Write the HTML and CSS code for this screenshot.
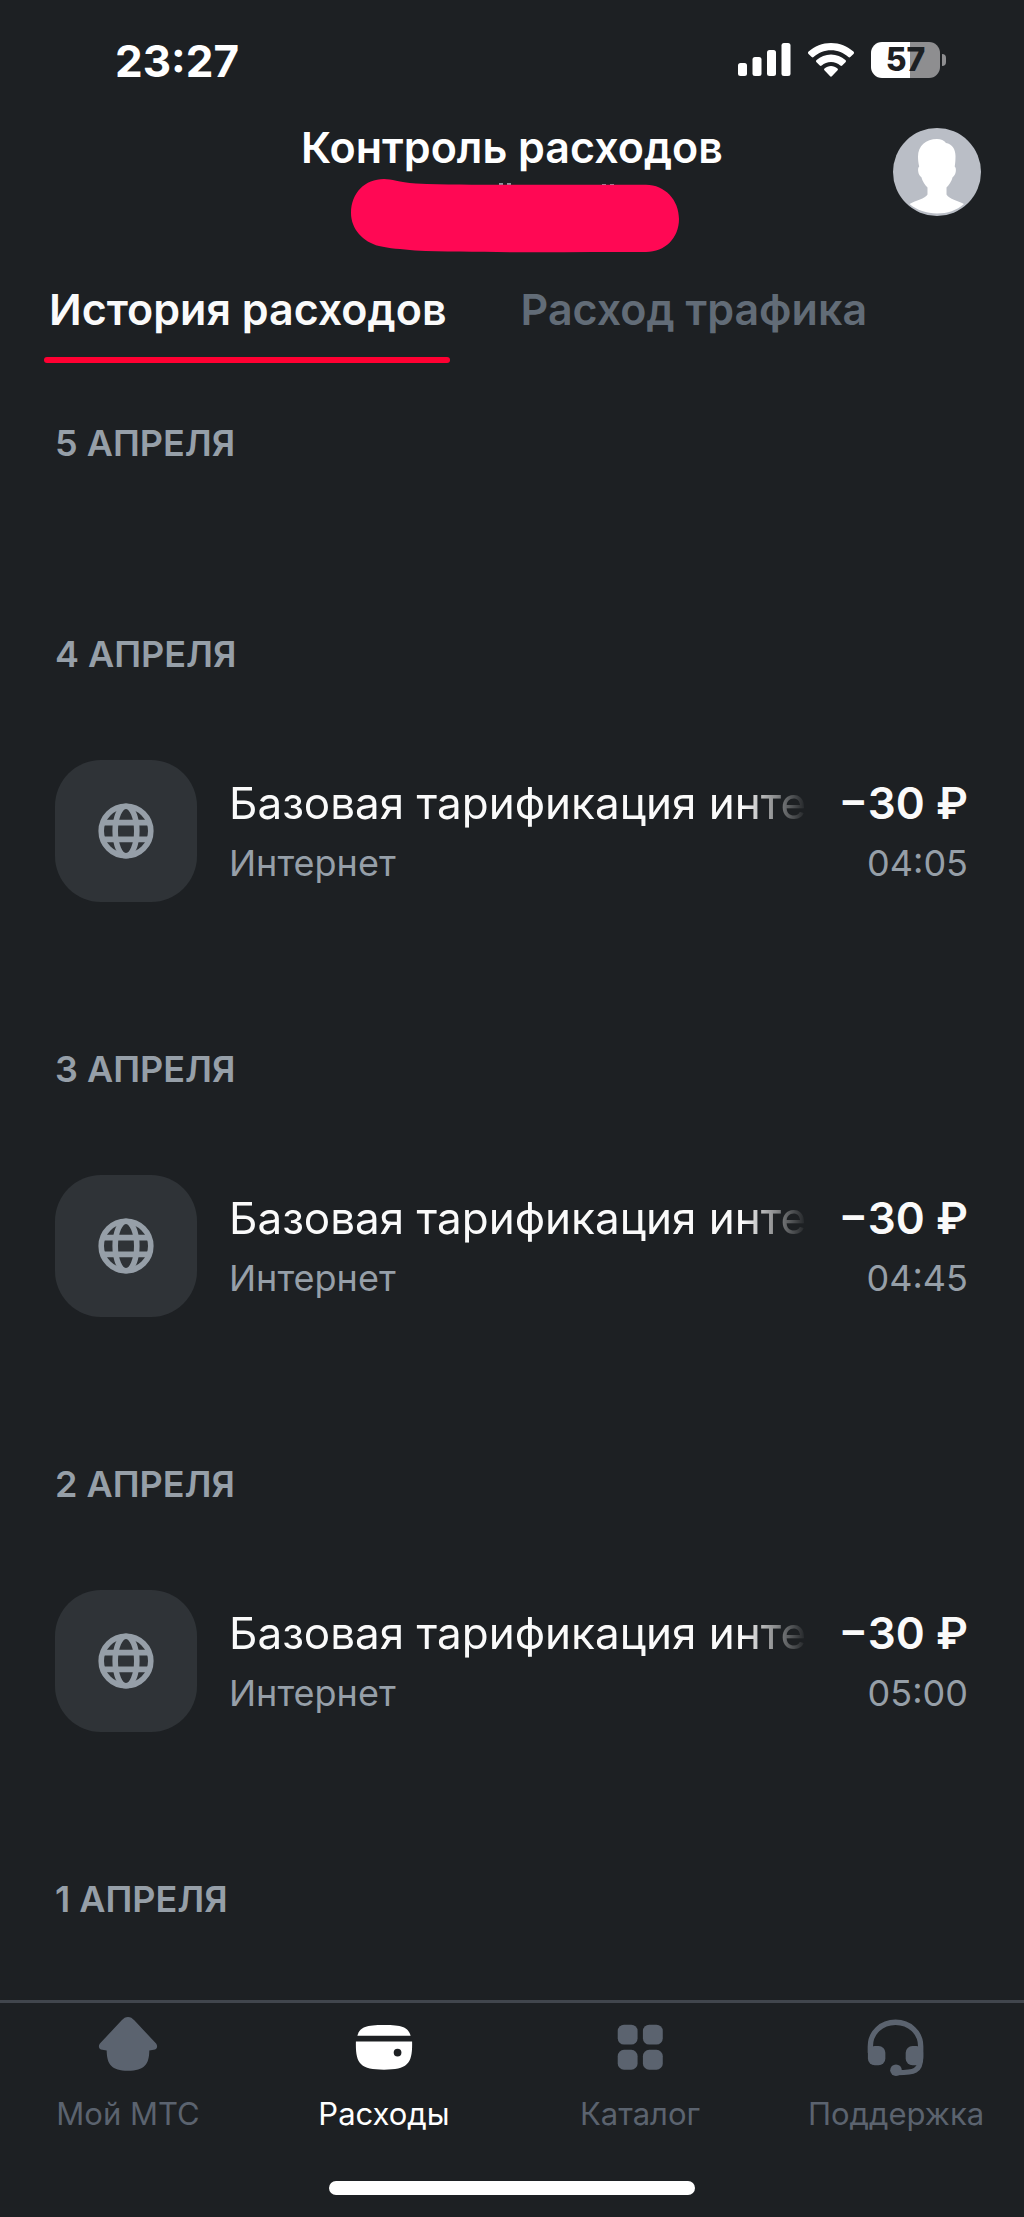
FILE: index.html
```html
<!DOCTYPE html>
<html lang="ru">
<head>
<meta charset="utf-8">
<meta name="viewport" content="width=device-width, initial-scale=1">
<title>Контроль расходов</title>
<link rel="stylesheet" href="styles.css">
</head>
<body>
<svg class="sprite" aria-hidden="true">
  <symbol id="globe" viewBox="0 0 56 56">
    <g fill="none" stroke="currentColor" stroke-width="5.600">
      <circle cx="28" cy="28" r="24.800"/>
      <ellipse cx="28" cy="28" rx="10.800" ry="24.800"/>
      <path d="M5 19.600h46M5 36.400h46"/>
    </g>
  </symbol>
</svg>

<div class="status">
  <time class="clock">23:27</time>
  <div class="indicators">
    <svg class="signal" viewBox="0 0 53 34" aria-hidden="true">
      <g fill="#fff">
        <rect x="0" y="20" width="9" height="13" rx="2.500"/>
        <rect x="14.500" y="14" width="9" height="19" rx="2.500"/>
        <rect x="29" y="7" width="9" height="26" rx="2.500"/>
        <rect x="43.500" y="0" width="9" height="33" rx="2.500"/>
      </g>
    </svg>
    <svg class="wifi" viewBox="0 0 46 34" aria-hidden="true">
      <g fill="#fff">
        <path d="M23 0C14.400 0 6.500 3.200.6 8.600c-.8.700-.8 1.600-.1 2.300l3.200 3.200c.6.600 1.300.6 1.900 0C10.300 9.800 16.300 7.300 23 7.300s12.700 2.500 17.400 6.800c.6.600 1.300.6 1.900 0l3.200-3.200c.7-.7.700-1.600-.1-2.300C39.500 3.200 31.600 0 23 0z"/>
        <path d="M23 11.500c-5.500 0-10.500 2.100-14.400 5.500-.7.600-.8 1.500-.1 2.200l3.300 3.300c.6.600 1.200.6 1.900.1 2.500-2.200 5.700-3.600 9.300-3.600s6.800 1.400 9.300 3.600c.7.500 1.300.5 1.900-.1l3.300-3.300c.7-.7.600-1.600-.1-2.200-3.900-3.400-8.900-5.500-14.400-5.500z"/>
        <path d="M23 23c-2.400 0-4.700.9-6.500 2.400-.6.500-.6 1.200-.1 1.800l5.500 5.900c.7.700 1.500.7 2.200 0l5.500-5.900c.5-.6.500-1.300-.1-1.800C27.700 23.900 25.400 23 23 23z"/>
      </g>
    </svg>
    <div class="battery"><span class="battery-level">57</span><i class="battery-tip"></i></div>
  </div>
</div>

<header class="header">
  <div class="heading">
    <h1 class="title">Контроль расходов</h1>
    <svg class="scribble" viewBox="0 0 334 74" aria-hidden="true">
      <g transform="translate(6)">
        <path fill="#8f97a1" d="M148 4h4v3h-4zM156 4h4v3h-4zM251 5h4v3h-4zM259 5h4v3h-4z"/>
        <path fill="#ff0854" d="M0 34C0 14 14 0 33 0c8 0 14 3 32 4.500 30 1.200 60 1.300 100 1.300h130C314 6 328 21 328 40c0 19-14 33-33 33-80 0-170 1-231-1.500C50 70 38 69.500 28 67 12 63 0 50 0 34z"/>
      </g>
    </svg>
  </div>
  <button class="avatar" type="button" aria-label="Профиль">
    <svg viewBox="0 0 88 88" aria-hidden="true">
      <circle cx="44" cy="44" r="44" fill="#babec6"/>
      <path fill="#fff" d="M44 11c4 0 7 1.500 9 4 6 1 9.500 6 9.500 13 0 4-.2 7-.8 10.500 1.300 1 1.400 3 1 5.500-.5 2.500-1.500 4-3 5-1.200 4.500-3.700 8-6.200 10.500v7c3 5 11 6 17.500 9.500C63.500 82.500 54.500 85.500 44 85.500S24 82 16.500 76C23 72 32 71 34.500 66.500v-7c-2.500-2.500-5-6-6.200-10.500-1.500-1-2.600-2.500-3-5-.4-2.500-.4-4.500.9-5.500-.8-3.500-1.200-6.500-1.200-10C25 18 33 11 44 11z"/>
    </svg>
  </button>
</header>

<nav class="tabs" aria-label="Разделы">
  <a class="tab tab-active" href="#history" aria-current="page">История расходов</a>
  <a class="tab" href="#traffic">Расход трафика</a>
</nav>

<main class="history" id="history">
  <section class="day">
    <h2 class="date">5 АПРЕЛЯ</h2>
  </section>
  <section class="day">
    <h2 class="date">4 АПРЕЛЯ</h2>
    <article class="expense">
      <div class="tile"><svg class="globe" aria-hidden="true"><use href="#globe"/></svg></div>
      <div class="about">
        <h3 class="name">Базовая тарификация инте</h3>
        <p class="note">Интернет</p>
      </div>
      <div class="sum">
        <p class="price">−30 ₽</p>
        <time class="note">04:05</time>
      </div>
    </article>
  </section>
  <section class="day">
    <h2 class="date">3 АПРЕЛЯ</h2>
    <article class="expense">
      <div class="tile"><svg class="globe" aria-hidden="true"><use href="#globe"/></svg></div>
      <div class="about">
        <h3 class="name">Базовая тарификация инте</h3>
        <p class="note">Интернет</p>
      </div>
      <div class="sum">
        <p class="price">−30 ₽</p>
        <time class="note">04:45</time>
      </div>
    </article>
  </section>
  <section class="day">
    <h2 class="date">2 АПРЕЛЯ</h2>
    <article class="expense">
      <div class="tile"><svg class="globe" aria-hidden="true"><use href="#globe"/></svg></div>
      <div class="about">
        <h3 class="name">Базовая тарификация инте</h3>
        <p class="note">Интернет</p>
      </div>
      <div class="sum">
        <p class="price">−30 ₽</p>
        <time class="note">05:00</time>
      </div>
    </article>
  </section>
  <section class="day">
    <h2 class="date">1 АПРЕЛЯ</h2>
  </section>
</main>

<footer class="bottom">
  <nav class="menu" aria-label="Главное меню">
    <a class="link" href="#home">
      <svg class="icon" viewBox="0 0 64 64" aria-hidden="true"><path fill="currentColor" d="M25.500 6.500C27.500 4.200 29.500 3 32 3s4.500 1.200 6.500 3.500L60.500 30c2.800 3 1.600 6.500-2 7l-4.500.6C53.800 52 49 58.500 32 58.500S10.200 52 10 37.600L5.500 37c-3.600-.5-4.800-4-2-7z"/></svg>
      Мой МТС
    </a>
    <a class="link link-active" href="#expenses" aria-current="page">
      <svg class="icon" viewBox="0 0 64 64" aria-hidden="true"><path fill="currentColor" d="M4.500 22.500C7 14 12 11.300 32 11.300S57 14 59.500 22.500zM3 28.500h58C61.500 51 57 57.500 32 57.500S2.500 51 3 28.500zM46 35.800a4 4 0 1 0 0 8 4 4 0 0 0 0-8z" fill-rule="evenodd"/></svg>
      Расходы
    </a>
    <a class="link" href="#catalog">
      <svg class="icon" viewBox="0 0 64 64" aria-hidden="true"><g fill="currentColor"><rect x="9" y="11" width="20.500" height="20.500" rx="6.500"/><rect x="35" y="11" width="20.500" height="20.500" rx="6.500"/><rect x="9" y="37" width="20.500" height="20.500" rx="6.500"/><rect x="35" y="37" width="20.500" height="20.500" rx="6.500"/></g></svg>
      Каталог
    </a>
    <a class="link" href="#support">
      <svg class="icon" viewBox="0 0 64 64" aria-hidden="true"><path fill="none" stroke="currentColor" stroke-width="5.500" d="M5.500 40v-6.500C5.500 19 17 8.500 31.500 8.500S57.500 19 57.500 33.500V44c0 15.500-7 16.500-24 16.500"/><g fill="currentColor"><rect x="3" y="33" width="18" height="20" rx="7"/><rect x="42" y="33" width="18" height="20" rx="7"/><circle cx="32" cy="58" r="6"/></g></svg>
      Поддержка
    </a>
  </nav>
  <div class="home-bar"></div>
</footer>
</body>
</html>
```

FILE: styles.css
```css
* {
  box-sizing: border-box;
  margin: 0;
  padding: 0;
}

body {
  display: flex;
  flex-direction: column;
  height: 100vh;
  overflow: hidden;
  background: #1d2023;
  color: #fafafa;
  font-family: Inter, "Liberation Sans", sans-serif;
}

a {
  color: inherit;
  text-decoration: none;
}

.sprite {
  position: absolute;
  width: 0;
  height: 0;
}

.status {
  display: flex;
  align-items: center;
  justify-content: space-between;
  height: 120px;
  padding: 0 78px 0 115px;
  color: #fff;
}

.clock {
  padding-top: 2px;
  font-size: 44px;
  font-weight: 700;
}

.indicators {
  display: flex;
  align-items: center;
  gap: 17px;
}

.signal {
  width: 53px;
  height: 34px;
}

.wifi {
  width: 46px;
  height: 34px;
}

.battery {
  display: flex;
  align-items: center;
  gap: 2px;
}

.battery-level {
  width: 69px;
  border-radius: 11px;
  background: linear-gradient(90deg, #fff 57%, #8e8e90 57%);
  color: #1d2023;
  font-size: 32px;
  font-weight: 800;
  line-height: 36px;
  text-align: center;
}

.battery-tip {
  width: 4px;
  height: 12px;
  border-radius: 0 6px 6px 0;
  background: #8e8e90;
}

.header {
  display: grid;
  grid-template-columns: 88px 1fr 88px;
  align-items: start;
  padding: 8px 43px 0;
}

.heading {
  display: flex;
  grid-column: 2;
  flex-direction: column;
  align-items: center;
}

.title {
  color: #fff;
  font-size: 43px;
  font-weight: 600;
  line-height: 38px;
  padding-bottom: 13px;
}

.scribble {
  width: 334px;
  height: 74px;
}

.avatar {
  width: 88px;
  height: 88px;
  border: 0;
  border-radius: 50%;
  background: none;
}

.avatar svg {
  display: block;
}

.tabs {
  display: flex;
  gap: 66px;
  padding: 26px 44px 0;
}

.tab {
  padding-left: 5px;
  color: #626c77;
  font-size: 43px;
  font-weight: 600;
  line-height: 60px;
  white-space: nowrap;
}

.tab::after {
  display: block;
  height: 6px;
  margin: 18px 0 0 -5px;
  border-radius: 3px;
  content: "";
}

.tab-active {
  padding-right: 3px;
  color: #fafafa;
}

.tab-active::after {
  margin-right: -3px;
  background: #ff0032;
}

.history {
  flex: 1;
  min-height: 0;
  padding: 58px 56px 0 55px;
  overflow-y: auto;
  scrollbar-width: none;
}

.day {
  padding-bottom: 83px;
}

.date {
  padding-bottom: 83px;
  color: #969fa8;
  font-size: 36px;
  font-weight: 600;
  line-height: 45px;
}

.expense {
  display: flex;
  align-items: center;
  gap: 32px;
  margin-bottom: 62px;
}

.tile {
  display: grid;
  flex: none;
  width: 142px;
  height: 142px;
  border-radius: 46px;
  background: #2f3337;
  color: #969fa8;
  place-items: center;
}

.globe {
  width: 56px;
  height: 56px;
}

.about {
  flex: 1;
  min-width: 0;
}

.name {
  overflow: hidden;
  font-size: 44px;
  font-weight: 400;
  line-height: 60px;
  white-space: nowrap;
  -webkit-mask-image: linear-gradient(90deg, #000 calc(100% - 64px), transparent);
  mask-image: linear-gradient(90deg, #000 calc(100% - 64px), transparent);
}

.note {
  display: block;
  color: #969fa8;
  font-size: 36px;
  line-height: 60px;
}

.about,
.sum {
  padding-top: 3px;
}

.sum {
  text-align: right;
}

.price {
  font-size: 44px;
  font-weight: 600;
  line-height: 60px;
}

.bottom {
  border-top: 3px solid #41464d;
}

.menu {
  display: grid;
  grid-template-columns: repeat(4, 1fr);
  padding-top: 11px;
}

.link {
  display: flex;
  flex-direction: column;
  align-items: center;
  gap: 15px;
  color: #5b636f;
  font-size: 31px;
  line-height: 46px;
}

.link-active {
  color: #fff;
}

.icon {
  width: 62px;
  height: 62px;
}

.home-bar {
  width: 366px;
  height: 14px;
  margin: 44px auto 22px;
  border-radius: 7px;
  background: #fff;
}
```
